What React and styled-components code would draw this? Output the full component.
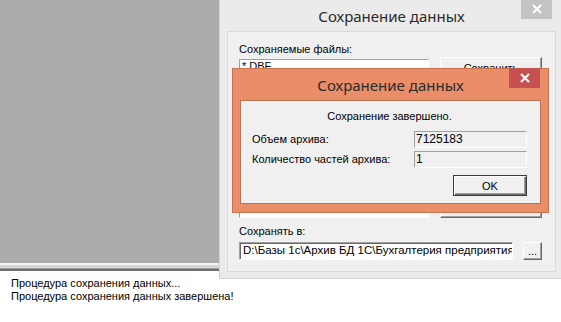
import styled, { createGlobalStyle } from 'styled-components';

const GlobalStyle = createGlobalStyle`
  html, body {
    margin: 0;
    padding: 0;
    overflow: hidden;
    background: #ffffff;
  }
`;

const ui = `"Liberation Sans", Arial, sans-serif`;

const Screen = styled.div`
  position: relative;
  width: 561px;
  height: 322px;
  display: flex;
  flex-direction: column;
  font-family: ${ui};
  font-size: 11px;
  color: #000;
  overflow: hidden;
`;

const Workspace = styled.div`
  height: 263px;
  background: #ababab;
`;

const Splitter = styled.div`
  height: 4px;
  border-top: 2px solid #f4f4f4;
  border-bottom: 2px solid #6e6e6e;
  background: #d6d6d6;
  box-shadow: inset 0 -1px 0 #a0a0a0;
`;

const Log = styled.div`
  flex: 1;
  padding: 6px 11px;
  line-height: 13px;
  background: #fff;
`;

const Window = styled.div`
  position: absolute;
  left: ${({ $x }) => $x}px;
  top: ${({ $y }) => $y}px;
  width: ${({ $w }) => $w}px;
  height: ${({ $h }) => $h}px;
  box-sizing: border-box;
  display: flex;
  flex-direction: column;
  background: ${({ $active }) => ($active ? '#ea8e69' : '#ebebeb')};
  border: 1px solid ${({ $active }) => ($active ? '#c8734f' : '#d2d2d2')};
  padding: 0 7px ${({ $active }) => ($active ? '8px' : '6px')} 7px;
`;

const TitleBar = styled.div`
  position: relative;
  height: ${({ $h }) => $h}px;
  flex-shrink: 0;
  display: flex;
  align-items: center;
  justify-content: center;
  font-family: "Noto Sans", "Open Sans", sans-serif;
  font-size: 15px;
  color: #2b2b2b;
`;

const CloseButton = styled.div`
  position: absolute;
  top: -1px;
  right: ${({ $r }) => $r}px;
  width: 31px;
  height: 20px;
  display: flex;
  align-items: center;
  justify-content: center;
  background: ${({ $active }) => ($active ? '#c75050' : '#c3c3c3')};
`;

const Client = styled.div`
  flex: 1;
  background: #f0f0f0;
  border: 1px solid ${({ $active }) => ($active ? '#b9714f' : '#dadada')};
  display: flex;
  flex-direction: column;
`;

const Label = styled.div`
  line-height: 13px;
  margin-top: ${({ $mt }) => $mt || 0}px;
`;

const Raised = styled.div`
  box-sizing: border-box;
  flex-shrink: 0;
  display: flex;
  align-items: center;
  justify-content: center;
  background: #f0f0f0;
  border: 1px solid;
  border-color: #ffffff #6a6a6a #6a6a6a #ffffff;
  box-shadow: inset -1px -1px 0 #a0a0a0;
  width: ${({ $w }) => $w}px;
  height: ${({ $h }) => $h}px;
`;

const DefaultButton = styled(Raised)`
  border-color: #3c3c3c;
  box-shadow: inset 1px 1px 0 #ffffff, inset -1px -1px 0 #6a6a6a, inset -2px -2px 0 #a0a0a0;
`;

const Sunken = styled.div`
  box-sizing: border-box;
  background: ${({ $bg }) => $bg || '#ffffff'};
  border: 1px solid;
  border-color: #a0a0a0 #ffffff #ffffff #a0a0a0;
  box-shadow: ${({ $deep }) => ($deep ? 'inset 1px 1px 0 #696969' : 'none')};
  line-height: 13px;
  padding: 1px 2px;
  white-space: nowrap;
  overflow: hidden;
`;

/* back window: "Сохранение данных" main form */
const SaveForm = styled.div`
  flex: 1;
  padding: 11px 11px 0 11px;
  display: flex;
  flex-direction: column;
`;

const FilesRow = styled.div`
  display: flex;
  gap: 11px;
  margin-top: 1px;
`;

const FileList = styled(Sunken)`
  width: 190px;
  height: 159px;
  margin-top: 2px;
  padding: 0 2px;
  line-height: 12px;
`;

const ButtonColumn = styled.div`
  display: flex;
  flex-direction: column;
  justify-content: space-between;
  height: 161px;
`;

const PathRow = styled.div`
  display: flex;
  gap: 10px;
  margin-top: 4px;
`;

const PathInput = styled(Sunken)`
  width: 274px;
  height: 18px;
  font-size: 11.5px;
  padding: 1px 3px;
`;

/* front window: result message */
const Result = styled.div`
  flex: 1;
  padding: 9px 13px 0 11px;
  display: grid;
  grid-template-columns: 1fr 113px;
  grid-auto-rows: min-content;
  row-gap: 3px;
  align-items: center;
`;

const Message = styled.div`
  grid-column: 1 / -1;
  text-align: center;
  line-height: 13px;
  margin-bottom: 5px;
`;

const ValueField = styled(Sunken)`
  height: 17px;
  font-size: 12px;
  line-height: 14px;
  padding: 0 1px;
`;

const Actions = styled.div`
  grid-column: 1 / -1;
  display: flex;
  justify-content: flex-end;
  margin-top: 4px;
`;

const CrossIcon = () => (
  <svg width="10" height="10" viewBox="0 0 10 10">
    <path d="M1 1 L9 9 M9 1 L1 9" stroke="#ffffff" strokeWidth="2" />
  </svg>
);

export default function App() {
  return (
    <>
      <GlobalStyle />
      <Screen>
        <Workspace />
        <Splitter />
        <Log>
          <div>Процедура сохранения данных...</div>
          <div>Процедура сохранения данных завершена!</div>
        </Log>

        <Window $x={219} $y={-1} $w={345} $h={280}>
          <TitleBar $h={31}>
            Сохранение данных
            <CloseButton $r={4}>
              <CrossIcon />
            </CloseButton>
          </TitleBar>
          <Client>
            <SaveForm>
              <Label>Сохраняемые файлы:</Label>
              <FilesRow>
                <FileList>*.DBF</FileList>
                <ButtonColumn>
                  <Raised $w={102} $h={22}>Сохранить</Raised>
                  <Raised $w={102} $h={22}>Закрыть</Raised>
                </ButtonColumn>
              </FilesRow>
              <Label $mt={7}>Сохранять в:</Label>
              <PathRow>
                <PathInput $deep>D:\Базы 1с\Архив БД 1С\Бухгалтерия предприятия 1С</PathInput>
                <Raised $w={19} $h={18}>...</Raised>
              </PathRow>
            </SaveForm>
          </Client>
        </Window>

        <Window $active $x={232} $y={68} $w={317} $h={145}>
          <TitleBar $h={31}>
            Сохранение данных
            <CloseButton $active $r={1}>
              <CrossIcon />
            </CloseButton>
          </TitleBar>
          <Client $active>
            <Result>
              <Message>Сохранение завершено.</Message>
              <Label>Объем архива:</Label>
              <ValueField $bg="#f0f0f0">7125183</ValueField>
              <Label>Количество частей архива:</Label>
              <ValueField $bg="#f0f0f0">1</ValueField>
              <Actions>
                <DefaultButton $w={74} $h={21}>OK</DefaultButton>
              </Actions>
            </Result>
          </Client>
        </Window>
      </Screen>
    </>
  );
}
